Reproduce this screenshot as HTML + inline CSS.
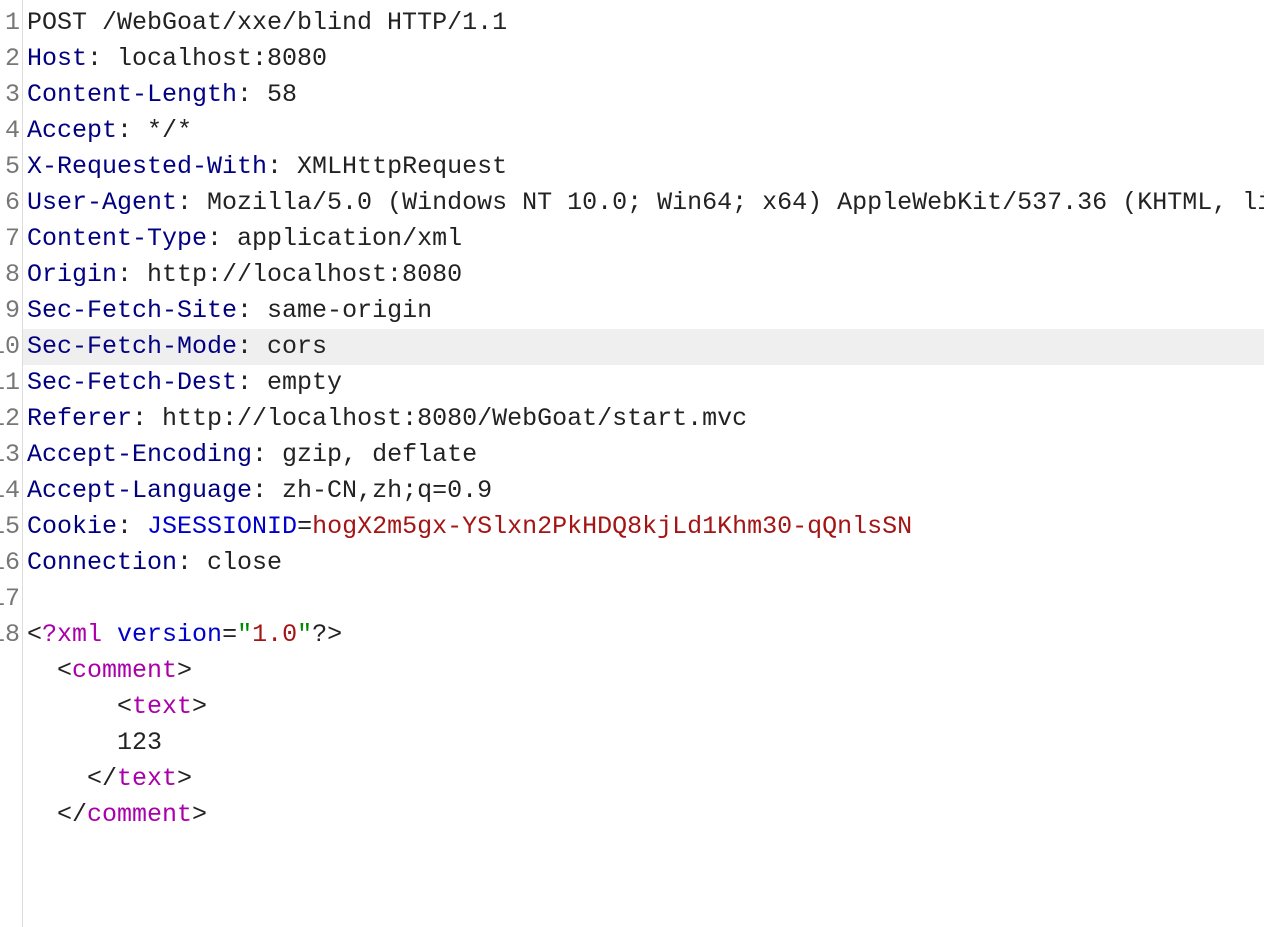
<!DOCTYPE html>
<html><head><meta charset="utf-8"><style>
html,body{margin:0;padding:0;background:#fff;width:1264px;height:927px;overflow:hidden}
.g{position:absolute;left:22px;top:0;width:1px;height:927px;background:#dcdcdc}
.hl{position:absolute;left:23px;top:329px;width:1241px;height:36px;background:#efefef}
.l{position:absolute;left:0;height:36px;line-height:36px;font-family:"Liberation Mono","Noto Sans CJK SC",monospace;font-size:25px;white-space:pre;color:#222}
.n{position:absolute;right:1244px;color:#777;text-align:right}
.c{position:absolute;left:27px}
.k{color:#000080}.r{color:#a31515}.p{color:#a0a}.b{color:#0000cc}.q{color:#080}
</style></head><body>
<div class="hl"></div><div class="g"></div>
<div class="l" style="top:5px;width:1264px"><span class="n">1</span><span class="c">POST /WebGoat/xxe/blind HTTP/1.1</span></div>
<div class="l" style="top:41px;width:1264px"><span class="n">2</span><span class="c"><span class="k">Host</span>: localhost:8080</span></div>
<div class="l" style="top:77px;width:1264px"><span class="n">3</span><span class="c"><span class="k">Content-Length</span>: 58</span></div>
<div class="l" style="top:113px;width:1264px"><span class="n">4</span><span class="c"><span class="k">Accept</span>: */*</span></div>
<div class="l" style="top:149px;width:1264px"><span class="n">5</span><span class="c"><span class="k">X-Requested-With</span>: XMLHttpRequest</span></div>
<div class="l" style="top:185px;width:1264px;overflow:hidden"><span class="n">6</span><span class="c"><span class="k">User-Agent</span>: Mozilla/5.0 (Windows NT 10.0; Win64; x64) AppleWebKit/537.36 (KHTML, like Gecko)</span></div>
<div class="l" style="top:221px;width:1264px"><span class="n">7</span><span class="c"><span class="k">Content-Type</span>: application/xml</span></div>
<div class="l" style="top:257px;width:1264px"><span class="n">8</span><span class="c"><span class="k">Origin</span>: http://localhost:8080</span></div>
<div class="l" style="top:293px;width:1264px"><span class="n">9</span><span class="c"><span class="k">Sec-Fetch-Site</span>: same-origin</span></div>
<div class="l" style="top:329px;width:1264px"><span class="n">10</span><span class="c"><span class="k">Sec-Fetch-Mode</span>: cors</span></div>
<div class="l" style="top:365px;width:1264px"><span class="n">11</span><span class="c"><span class="k">Sec-Fetch-Dest</span>: empty</span></div>
<div class="l" style="top:401px;width:1264px"><span class="n">12</span><span class="c"><span class="k">Referer</span>: http://localhost:8080/WebGoat/start.mvc</span></div>
<div class="l" style="top:437px;width:1264px"><span class="n">13</span><span class="c"><span class="k">Accept-Encoding</span>: gzip, deflate</span></div>
<div class="l" style="top:473px;width:1264px"><span class="n">14</span><span class="c"><span class="k">Accept-Language</span>: zh-CN,zh;q=0.9</span></div>
<div class="l" style="top:509px;width:1264px"><span class="n">15</span><span class="c"><span class="k">Cookie</span>: <span class="b">JSESSIONID</span>=<span class="r">hogX2m5gx-YSlxn2PkHDQ8kjLd1Khm30-qQnlsSN</span></span></div>
<div class="l" style="top:545px;width:1264px"><span class="n">16</span><span class="c"><span class="k">Connection</span>: close</span></div>
<div class="l" style="top:581px;width:1264px"><span class="n">17</span><span class="c"></span></div>
<div class="l" style="top:617px;width:1264px"><span class="n">18</span><span class="c">&lt;<span class="p">?xml</span> <span class="b">version</span>=<span class="q">"</span><span class="r">1.0</span><span class="q">"</span>?&gt;</span></div>
<div class="l" style="top:653px;width:1264px"><span class="c">  &lt;<span class="p">comment</span>&gt;</span></div>
<div class="l" style="top:689px;width:1264px"><span class="c">      &lt;<span class="p">text</span>&gt;</span></div>
<div class="l" style="top:725px;width:1264px"><span class="c">      123</span></div>
<div class="l" style="top:761px;width:1264px"><span class="c">    &lt;/<span class="p">text</span>&gt;</span></div>
<div class="l" style="top:797px;width:1264px"><span class="c">  &lt;/<span class="p">comment</span>&gt;</span></div>
</body></html>
